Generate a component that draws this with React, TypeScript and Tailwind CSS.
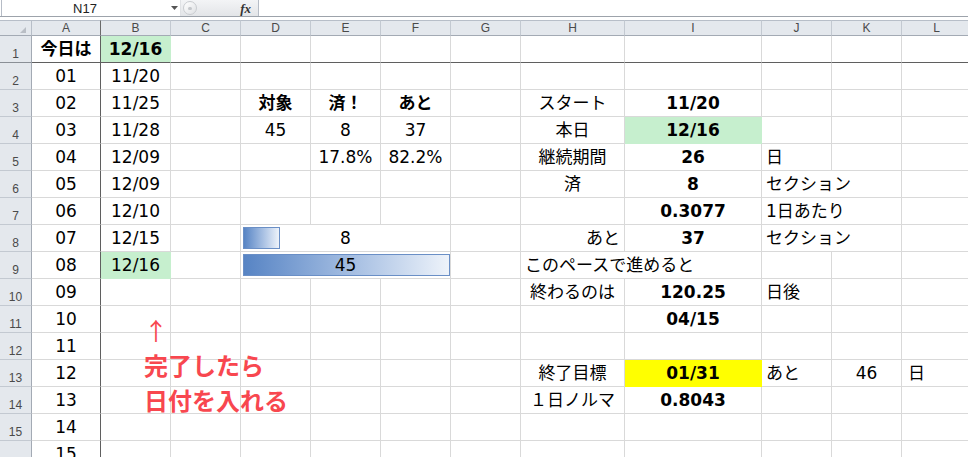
import React from "react";

type Cell = {
  t: React.ReactNode;
  b?: boolean;
  a?: "l" | "r";
  k?: string;
  noR?: boolean;
  span?: 3;
  bar?: number;
};

const GREEN = "text-[#006100] bg-[#c6efce] border-r-[#c6efce] border-b-[#c6efce]";

const data: Record<number, Record<number, Cell>> = {
  1: { 0: { t: "今日は", b: true }, 1: { t: "12/16", b: true, k: "text-[#006100] bg-[#c6efce] border-r-[#c6efce]" } },
  2: { 0: { t: "01" }, 1: { t: "11/20" } },
  3: {
    0: { t: "02" },
    1: { t: "11/25" },
    3: { t: "対象", b: true },
    4: { t: "済！", b: true },
    5: { t: "あと", b: true },
    7: { t: "スタート" },
    8: { t: "11/20", b: true },
  },
  4: {
    0: { t: "03" },
    1: { t: "11/28" },
    3: { t: "45" },
    4: { t: "8" },
    5: { t: "37" },
    7: { t: "本日" },
    8: { t: "12/16", b: true, k: GREEN },
  },
  5: {
    0: { t: "04" },
    1: { t: "12/09" },
    4: { t: "17.8%" },
    5: { t: "82.2%" },
    7: { t: "継続期間" },
    8: { t: "26", b: true },
    9: { t: "日", a: "l" },
  },
  6: {
    0: { t: "05" },
    1: { t: "12/09" },
    7: { t: "済" },
    8: { t: "8", b: true },
    9: { t: "セクション", a: "l", noR: true },
  },
  7: {
    0: { t: "06" },
    1: { t: "12/10" },
    8: { t: "0.3077", b: true },
    9: { t: "1日あたり", a: "l", noR: true },
  },
  8: {
    0: { t: "07" },
    1: { t: "12/15" },
    3: { t: "8", span: 3, bar: 8 },
    7: { t: "あと", a: "r" },
    8: { t: "37", b: true },
    9: { t: "セクション", a: "l", noR: true },
  },
  9: {
    0: { t: "08" },
    1: { t: "12/16", k: GREEN },
    3: { t: "45", span: 3, bar: 45 },
    7: { t: "このペースで進めると", a: "l", noR: true },
  },
  10: {
    0: { t: "09" },
    7: { t: "終わるのは" },
    8: { t: "120.25", b: true },
    9: { t: "日後", a: "l" },
  },
  11: { 0: { t: "10" }, 8: { t: "04/15", b: true } },
  12: { 0: { t: "11" } },
  13: {
    0: { t: "12" },
    7: { t: "終了目標" },
    8: { t: "01/31", b: true, k: "bg-[#ffff00] border-r-[#ffff00] border-b-[#ffff00]" },
    9: { t: "あと", a: "l" },
    10: { t: "46" },
    11: { t: "日", a: "l", k: "pl-[6px]" },
  },
  14: { 0: { t: "13" }, 7: { t: "１日ノルマ" }, 8: { t: "0.8043", b: true } },
  15: { 0: { t: "14" } },
  16: { 0: { t: "15" } },
};

const LETTERS = ["A", "B", "C", "D", "E", "F", "G", "H", "I", "J", "K", "L"];
const MAX_BAR = 45;
const BAR_FULL = 207;

function Header() {
  return (
    <>
      <div className="relative bg-[#e4e8ed] border-t border-b border-r border-[#b7bec8] border-b-[#a3aab4]">
        <svg className="absolute left-0 top-0" width="32" height="15" viewBox="0 0 32 15">
          <polygon points="26,6 26,12 20,12" fill="#b9bec5" />
        </svg>
      </div>
      {LETTERS.map((l, i) => (
        <div
          key={l}
          className={
            "flex items-center justify-center bg-[#e4e8ed] border-t border-b border-r border-[#c3c9d1] border-t-[#b7bec8] border-b-[#a3aab4] text-[12px] leading-none text-[#4a4a4a] font-['Liberation_Sans',sans-serif] " +
            (i === 0 ? "border-r-[#6a6a6a]" : "")
          }
        >
          {l}
        </div>
      ))}
    </>
  );
}

function Row({ r }: { r: number }) {
  const cells: React.ReactNode[] = [];
  const row = data[r] || {};
  for (let c = 0; c < 12; c++) {
    const cell = row[c];
    const span = cell?.span ?? 1;
    let cls =
      "flex items-center whitespace-nowrap text-[17px] leading-none text-black border-b border-[#d9d9d9] ";
    if (!cell?.noR) cls += "border-r ";
    if (cell?.a === "l") cls += "justify-start pl-[4px] ";
    else if (cell?.a === "r") cls += "justify-end pr-[4px] ";
    else cls += "justify-center ";
    if (cell?.b) cls += "font-bold ";
    if (span === 3) cls += "col-span-3 relative ";
    if (c === 0) cls += "border-r-[#5f5f5f] ";
    if (r === 1) cls += "border-b-[#5f5f5f] ";
    if (cell?.k) cls += cell.k;

    if (cell?.bar !== undefined) {
      cells.push(
        <div key={c} className={cls + " !items-start !justify-start pt-[2px] pl-[2px]"}>
          <div
            className="h-[22px] border border-[#6a8fc6] bg-gradient-to-r from-[#5784c4] to-[#eef3fa]"
            style={{ width: Math.round((cell.bar / MAX_BAR) * BAR_FULL) }}
          />
          <div className="absolute inset-0 flex items-center justify-center">{cell.t}</div>
        </div>
      );
    } else {
      cells.push(
        <div key={c} className={cls}>
          {cell?.t}
        </div>
      );
    }
    c += span - 1;
  }
  return (
    <>
      <div
        className={
          "flex items-end justify-center pb-[2px] bg-[#e4e8ed] border-r border-b border-[#c3c9d1] border-r-[#a3aab4] text-[12px] leading-none text-[#4a4a4a] font-['Liberation_Sans',sans-serif] " +
          (r === 1 ? "border-b-[#8a8f96]" : "")
        }
      >
        {r <= 15 ? r : ""}
      </div>
      {cells}
    </>
  );
}

export default function App() {
  return (
    <div className="relative w-[968px] h-[457px] overflow-hidden bg-white font-['DejaVu_Sans','Noto_Sans_CJK_JP',sans-serif]">
      {/* formula bar */}
      <div className="flex h-[17px] border-b border-[#9da3ab] bg-white">
        <div className="w-[2px] border-r border-[#b6bcc6]" />
        <div className="w-[166px] flex items-center justify-center text-[13px] leading-none text-[#222] font-['Liberation_Sans',sans-serif]">
          N17
        </div>
        <div className="w-[12px] flex items-center justify-center">
          <svg width="7" height="4" viewBox="0 0 7 4">
            <polygon points="0,0 7,0 3.5,4" fill="#555" />
          </svg>
        </div>
        <div className="w-[78px] flex items-center bg-gradient-to-b from-[#f3f4f6] to-[#e3e5e8] border-l border-[#e0e2e5]">
          <div className="ml-[2px] w-[14px] h-[14px] rounded-full border border-[#c9ccd0] bg-gradient-to-br from-white to-[#dfe1e4] flex items-center justify-center">
            <div className="w-[4px] h-[3px] rounded-full bg-[#c4c7cb]" />
          </div>
          <div className="ml-auto mr-[7px] text-[13px] leading-none italic font-bold text-[#333] font-['Liberation_Serif',serif]">
            fx
          </div>
        </div>
        <div className="flex-1 border-l border-[#b6bcc6] bg-white" />
      </div>
      <div className="h-[3px] bg-white" />
      {/* sheet */}
      <div className="grid w-max grid-cols-[32px_69px_70px_70px_70px_70px_70px_70px_104px_137px_70px_70px_70px] grid-rows-[16px_repeat(16,27px)]">
        <Header />
        {Array.from({ length: 16 }, (_, i) => (
          <Row key={i} r={i + 1} />
        ))}
      </div>
      {/* text box overlay */}
      <div className="absolute left-[144px] top-[312px] flex flex-col text-[#f8474f] font-['Noto_Sans_CJK_JP',sans-serif] text-[24px] leading-[35px]">
        <div className="font-normal">↑</div>
        <div className="font-bold">完了したら</div>
        <div className="font-bold">日付を入れる</div>
      </div>
    </div>
  );
}
